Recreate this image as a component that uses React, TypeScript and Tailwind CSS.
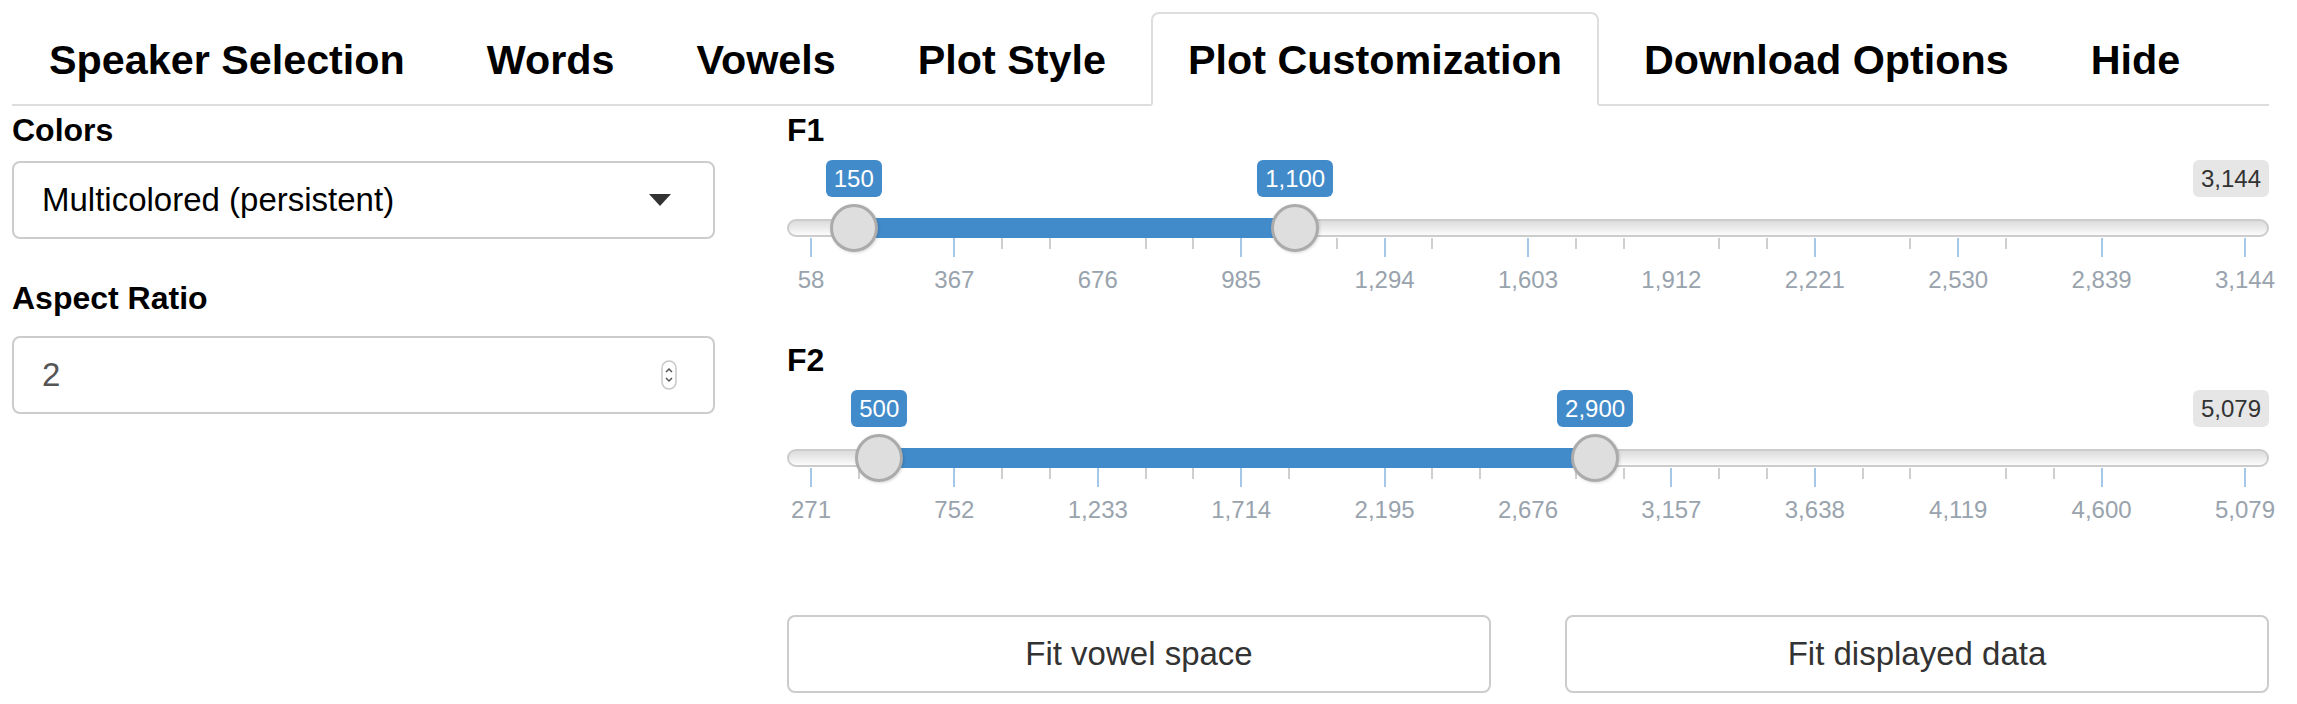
import React from "react";

const tabs = [
  "Speaker Selection",
  "Words",
  "Vowels",
  "Plot Style",
  "Plot Customization",
  "Download Options",
  "Hide",
];

type SliderProps = {
  min: number;
  max: number;
  from: number;
  to: number;
  fromLabel: string;
  toLabel: string;
  maxLabel: string;
  labels: string[];
  majors: number[];
  minors: number[];
};

// horizontal place on the slider; the handle half width (24px) is kept free on each side
const pos = (f: number) => `calc(24px + ${f} * (100% - 48px))`;
// same, measured inside the track's 2px border
const posIn = (f: number) => `calc(22px + ${f} * (100% - 44px))`;

function RangeSlider({ min, max, from, to, fromLabel, toLabel, maxLabel, labels, majors, minors }: SliderProps) {
  const ff = (from - min) / (max - min);
  const ft = (to - min) / (max - min);
  return (
    <div className="flex flex-col">
      {/* value bubbles */}
      <div className="relative h-[37px] text-[24px] leading-[37px]">
        {[
          [ff, fromLabel],
          [ft, toLabel],
        ].map(([f, l], i) => (
          <div
            key={"v" + i}
            className="absolute top-0 -translate-x-1/2 whitespace-nowrap rounded-[6px] bg-[#428bca] px-[8px] text-white"
            style={{ left: pos(f as number) }}
          >
            {l}
          </div>
        ))}
        <div className="absolute right-0 top-0 rounded-[6px] bg-[#e6e6e6] px-[8px] text-[#333]">{maxLabel}</div>
      </div>

      {/* track with bar and handles */}
      <div className="relative mt-[22px] h-[18px] rounded-full border-2 border-[#cccccc] bg-linear-to-b from-[#dcdcdc] to-[#fbfbfb]">
        <div
          className="absolute -top-[3px] h-[20px] bg-[#428bca]"
          style={{ left: posIn(ff), right: `calc(22px + ${1 - ft} * (100% - 44px))` }}
        />
        {[ff, ft].map((f, i) => (
          <div
            key={"h" + i}
            className="absolute top-1/2 z-10 h-[48px] w-[48px] -translate-x-1/2 -translate-y-1/2 rounded-full border-[3px] border-[#ababab] bg-[#dedede] shadow-[1px_1px_3px_rgba(0,0,0,0.15)]"
            style={{ left: posIn(f) }}
          />
        ))}
      </div>

      {/* grid ticks */}
      <div className="relative mt-[1px] h-[19px]">
        {minors.map((j) => (
          <div
            key={"s" + j}
            className="absolute top-0 h-[11px] w-[2px] -translate-x-1/2 bg-[#cfcfcf]"
            style={{ left: pos(j / 30) }}
          />
        ))}
        {majors.map((k) => (
          <div
            key={"b" + k}
            className="absolute top-0 h-[19px] w-[2px] -translate-x-1/2 bg-[#a6c8e8]"
            style={{ left: pos(k / 10) }}
          />
        ))}
      </div>

      {/* grid labels */}
      <div className="relative mt-[9px] h-[28px] text-[24px] leading-[28px] text-[#99a3ad]">
        {labels.map((l, k) => (
          <div
            key={"l" + k}
            className="absolute top-0 -translate-x-1/2 whitespace-nowrap"
            style={{ left: pos(k / 10) }}
          >
            {l}
          </div>
        ))}
      </div>
    </div>
  );
}

export default function App() {
  return (
    <div className="min-h-screen bg-white pl-[12px] pr-[28px] pt-[12px] font-['Liberation_Sans',Arial,sans-serif] text-black">
      <ul className="flex gap-[8px] border-b-2 border-[#dddddd]">
        {tabs.map((t) => {
          const active = t === "Plot Customization";
          return (
            <li key={t}>
              <div
                className={
                  "-mb-[2px] flex h-[94px] items-center whitespace-nowrap rounded-t-[8px] border-2 px-[35px] pt-[4px] text-[41.3px] font-bold " +
                  (active ? "border-[#dddddd] border-b-white bg-white" : "border-transparent")
                }
              >
                {t}
              </div>
            </li>
          );
        })}
      </ul>

      <div className="flex gap-[72px] pt-[4px]">
        <div className="flex w-[703px] shrink-0 flex-col">
          <div className="text-[32px] font-bold leading-[40px]">Colors</div>
          <div className="mt-[11px] flex h-[78px] items-center justify-between rounded-[8px] border-2 border-[#cccccc] pl-[28px] pr-[42px] text-[33px]">
            <span>Multicolored (persistent)</span>
            <svg width="22" height="12" viewBox="0 0 22 12">
              <polygon points="0,0 22,0 11,12" fill="#333" />
            </svg>
          </div>

          <div className="mt-[39px] text-[32px] font-bold leading-[40px]">Aspect Ratio</div>
          <div className="mt-[18px] flex h-[78px] items-center justify-between rounded-[8px] border-2 border-[#cccccc] pl-[28px] pr-[36px] text-[33px] text-[#555]">
            <span>2</span>
            <svg width="16" height="30" viewBox="0 0 16 30">
              <rect x="1" y="1" width="14" height="28" rx="7" fill="white" stroke="#c8c8c8" strokeWidth="1.5" />
              <path d="M5 12 L8 9 L11 12" fill="none" stroke="#555" strokeWidth="1.5" />
              <path d="M5 18 L8 21 L11 18" fill="none" stroke="#555" strokeWidth="1.5" />
            </svg>
          </div>
        </div>

        <div className="flex flex-1 flex-col">
          <div className="text-[32px] font-bold leading-[40px]">F1</div>
          <div className="mb-[46px] mt-[10px]">
            <RangeSlider
              min={58}
              max={3144}
              from={150}
              to={1100}
              fromLabel="150"
              toLabel="1,100"
              maxLabel="3,144"
              labels={["58", "367", "676", "985", "1,294", "1,603", "1,912", "2,221", "2,530", "2,839", "3,144"]}
              majors={[0, 1, 3, 4, 5, 7, 8, 9, 10]}
              minors={[1, 4, 5, 7, 8, 10, 11, 13, 16, 17, 19, 20, 23, 25]}
            />
          </div>

          <div className="text-[32px] font-bold leading-[40px]">F2</div>
          <div className="mt-[10px]">
            <RangeSlider
              min={271}
              max={5079}
              from={500}
              to={2900}
              fromLabel="500"
              toLabel="2,900"
              maxLabel="5,079"
              labels={["271", "752", "1,233", "1,714", "2,195", "2,676", "3,157", "3,638", "4,119", "4,600", "5,079"]}
              majors={[0, 1, 2, 3, 4, 6, 7, 9, 10]}
              minors={[1, 4, 5, 7, 8, 10, 13, 14, 16, 17, 19, 20, 22, 23, 25, 26]}
            />
          </div>

          <div className="mt-[91px] grid grid-cols-2 gap-[74px]">
            <button className="h-[78px] rounded-[8px] border-2 border-[#cccccc] bg-white text-[33px] text-[#333]">
              Fit vowel space
            </button>
            <button className="h-[78px] rounded-[8px] border-2 border-[#cccccc] bg-white text-[33px] text-[#333]">
              Fit displayed data
            </button>
          </div>
        </div>
      </div>
    </div>
  );
}
